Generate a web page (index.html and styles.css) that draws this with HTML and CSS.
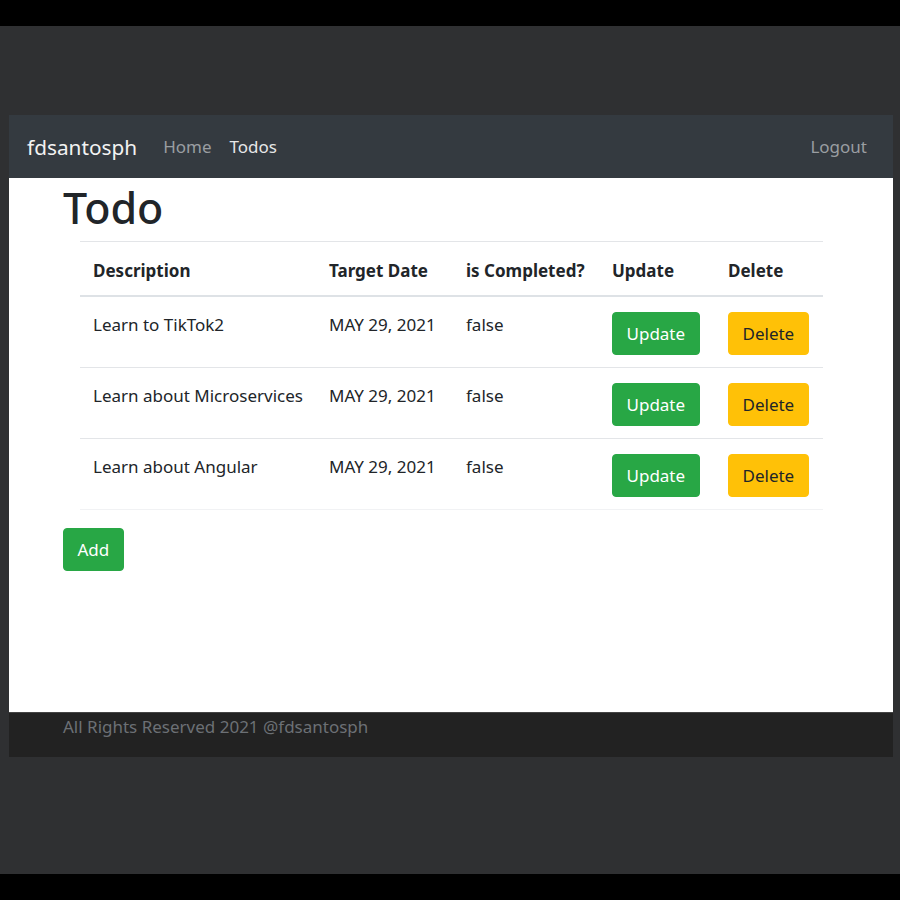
FILE: index.html
```html
<!DOCTYPE html>
<html>
<head>
<meta charset="utf-8">
<link rel="stylesheet" href="styles.css">
</head>
<body>
<div class="topbar"></div>
<div class="stage">
  <div class="window">
    <nav class="navbar">
      <span class="brand">fdsantosph</span>
      <a class="nav-link">Home</a>
      <a class="nav-link active">Todos</a>
      <span class="spacer"></span>
      <a class="nav-link">Logout</a>
    </nav>
    <main class="content">
      <h1 class="title">Todo</h1>
      <table class="table">
        <thead>
          <tr>
            <th class="c-desc">Description</th>
            <th class="c-date">Target Date</th>
            <th class="c-done">is Completed?</th>
            <th class="c-upd">Update</th>
            <th class="c-del">Delete</th>
          </tr>
        </thead>
        <tbody>
          <tr>
            <td>Learn to TikTok2</td>
            <td>MAY 29, 2021</td>
            <td>false</td>
            <td><button class="btn btn-success">Update</button></td>
            <td><button class="btn btn-warning">Delete</button></td>
          </tr>
          <tr>
            <td>Learn about Microservices</td>
            <td>MAY 29, 2021</td>
            <td>false</td>
            <td><button class="btn btn-success">Update</button></td>
            <td><button class="btn btn-warning">Delete</button></td>
          </tr>
          <tr>
            <td>Learn about Angular</td>
            <td>MAY 29, 2021</td>
            <td>false</td>
            <td><button class="btn btn-success">Update</button></td>
            <td><button class="btn btn-warning">Delete</button></td>
          </tr>
        </tbody>
      </table>
      <div class="actions"><button class="btn btn-success btn-add">Add</button></div>
    </main>
    <footer class="footer">All Rights Reserved 2021 @fdsantosph</footer>
  </div>
</div>
<div class="bottombar"></div>
</body>
</html>
```
FILE: styles.css
```css
* { box-sizing: border-box; }
html, body { margin: 0; padding: 0; }
body {
  width: 900px;
  height: 900px;
  background: #2f3032;
  font-family: "Noto Sans", "Open Sans", sans-serif;
  color: #212529;
  display: flex;
  flex-direction: column;
}
.topbar { height: 26px; background: #000; flex: none; }
.bottombar { height: 26px; background: #000; flex: none; }
.stage {
  flex: 1;
  padding: 89px 7px 0 9px;
}
.window {
  height: 642px;
  display: flex;
  flex-direction: column;
  background: #fff;
}
.navbar {
  height: 63px;
  background: #343a40;
  display: flex;
  align-items: center;
  padding: 0 26px 0 18px;
  flex: none;
}
.brand {
  color: #f2f2f2;
  font-size: 20.8px;
  margin-right: 26px;
}
.nav-link {
  color: #9a9ea2;
  font-size: 17px;
  margin-right: 18px;
}
.nav-link.active { color: #e6e7e8; }
.spacer { flex: 1; }
.navbar .nav-link:last-child { margin-right: 0; }
.content {
  flex: 1;
  padding: 0 0 0 54px;
}
.title {
  font-size: 43px;
  font-weight: 500;
  line-height: 1.2;
  margin: 4px 0 7px 0;
  color: #212529;
}
.table {
  border-collapse: collapse;
  margin-left: 17px;
  width: 743px;
  font-size: 17px;
}
.table th, .table td {
  text-align: left;
  vertical-align: top;
  padding: 15px 13px 12px;
  line-height: 26px;
  border-top: 1px solid #e3e5e8;
}
.table thead th {
  font-weight: 700;
  border-bottom: 2px solid #dee2e6;
  padding: 16px 13px 11px;
}
.table tbody tr:first-child td { border-top: none; }
.table tbody tr:last-child td { border-bottom: 1px solid #f1f2f4; }
.c-desc { width: 236px; }
.c-date { width: 137px; }
.c-done { width: 146px; }
.c-upd { width: 116px; }
.btn {
  font-family: inherit;
  font-size: 17px;
  line-height: 25px;
  padding: 8px 13.5px;
  border-radius: 4px;
  border: 1px solid transparent;
  cursor: pointer;
}
.btn-success { background: #28a745; border-color: #28a745; color: #fff; }
.btn-warning { background: #ffc107; border-color: #ffc107; color: #212529; }
.actions { margin-top: 18px; }
.footer {
  height: 45px;
  flex: none;
  background: #222222;
  color: #6c7075;
  font-size: 17px;
  padding: 2px 0 0 54px;
  border-top: 1px solid #444;
}
```
